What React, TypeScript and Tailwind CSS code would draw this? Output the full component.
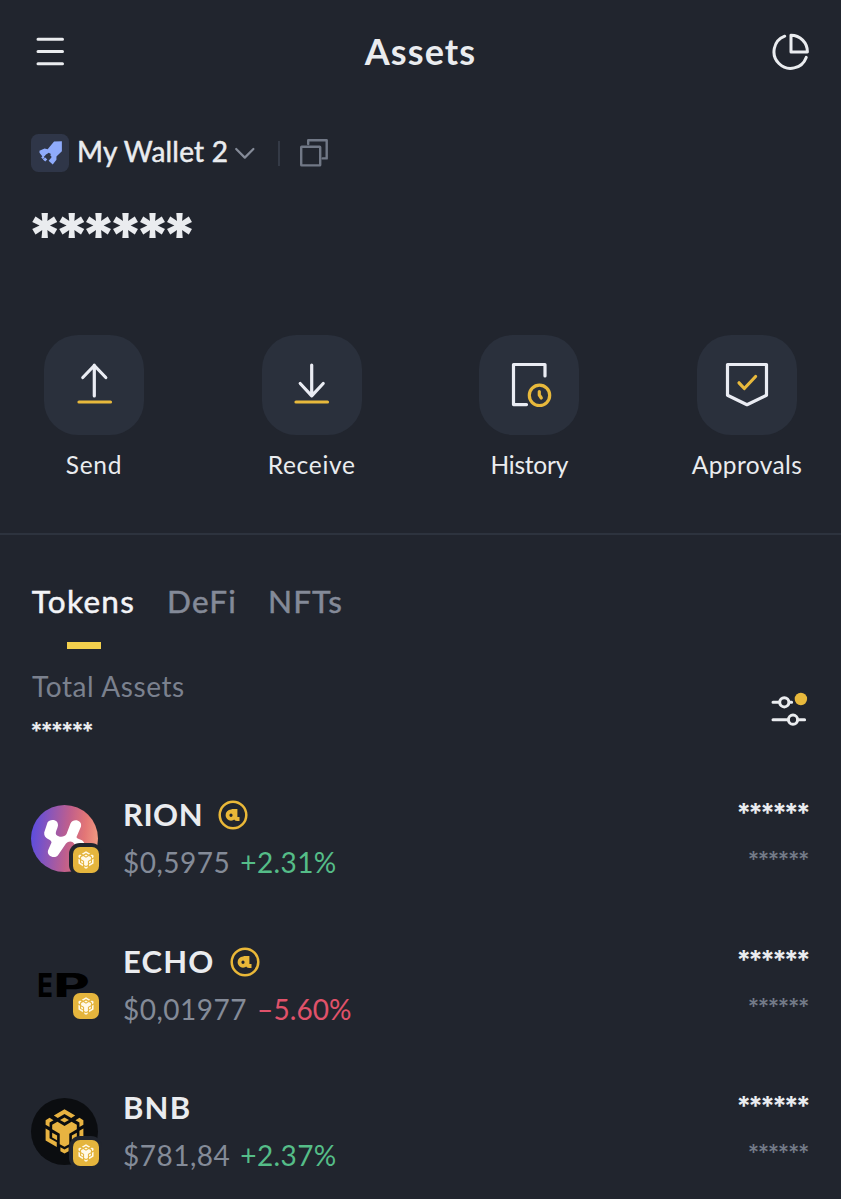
import type { ReactNode } from "react";

function MenuIcon() {
  return (
    <svg width="36" height="36" viewBox="32 34 36 36" fill="none" stroke="#eaecef" strokeWidth="3" strokeLinecap="round">
      <path d="M38 39.3H62.5M38 51.5H62.5M38 63.8H62.5" />
    </svg>
  );
}

function PieIcon() {
  return (
    <svg width="40" height="40" viewBox="771 32 40 40" fill="none" stroke="#eaecef" strokeWidth="3" strokeLinecap="round" strokeLinejoin="round">
      <path d="M784.7 36.2A16.6 16.6 0 1 0 806.2 57.4" />
      <path d="M791 35.2V51.9H807.4A16.5 16.5 0 0 0 791 35.2Z" />
    </svg>
  );
}

function RocketIcon() {
  return (
    <svg width="38" height="38" viewBox="0 0 112 112">
      <rect width="112" height="112" rx="22" fill="#2f3648" />
      <path
        d="M91 21V51L75 66V76L64 90L52 79L57 73L61 68L54 59L44 61L36 69L25 55V49L40 43L49 45L68 22Z"
        fill="#8fabfb"
      />
      <path d="M43 62L52 55L59 59L53 67L47 68Z" fill="#2f3648" />
      <path d="M35 64L40 69L35 74L30 69ZM42 69L48 75L42 81L35 75Z" fill="#8fabfb" />
    </svg>
  );
}

function CopyIcon() {
  return (
    <svg width="32" height="32" viewBox="298 137 32 32" fill="none" stroke="#717886" strokeWidth="2.4" strokeLinecap="round" strokeLinejoin="round">
      <rect x="301.2" y="146.8" width="19" height="18.6" rx="0.5" />
      <path d="M308.2 144V140.2H326.7V158.4H322.6" />
    </svg>
  );
}

function FilterIcon() {
  return (
    <svg width="38" height="38" viewBox="770 690 38 38" fill="none" stroke="#eaecef" strokeWidth="3" strokeLinecap="round">
      <path d="M773 702.3H779M790 702.3H791.6M773 719.7H787.5M798.5 719.7H804.6" />
      <circle cx="784.3" cy="702.3" r="4.6" />
      <circle cx="793" cy="719.7" r="4.6" />
      <circle cx="800.9" cy="699" r="6.2" fill="#e8b93c" stroke="none" />
    </svg>
  );
}

function AlphaBadge() {
  return (
    <svg width="30" height="30" viewBox="0 0 30 30" fill="none" stroke="#eab838" className="mt-[2px]">
      <circle cx="15" cy="15" r="13.3" strokeWidth="2.5" />
      <ellipse cx="13" cy="15.2" rx="3.5" ry="3.7" strokeWidth="3.8" />
      <path d="M13.5 11H17.5V17.2Q17.5 19 19.3 19H21.5" strokeWidth="3.8" />
    </svg>
  );
}

function ChainMark({ color, className }: { color: string; className: string }) {
  return (
    <svg viewBox="76 71 117 137" className={className} fill={color}>
      <path d="M134.5 72L167 91L155 98.5L134.5 86.5L114 98.5L102 91Z" />
      <path d="M134.5 97L148 104.5L134.5 112L121 104.5Z" />
      <path d="M77 105L89 98L101 105L89 112V126L77 119Z" />
      <path d="M192 105L180 98L168 105L180 112V126L192 119Z" />
      <path d="M97 119L113 110L134.5 122.5L156 110L172 119V133L149 146.5V178L134.5 186L120 178V146.5L97 133Z" />
      <path d="M77 130L89 137V160L111 172.5V186.5L77 167Z" />
      <path d="M192 130L180 137V160L158 172.5V186.5L192 167Z" />
      <path d="M97 143L112 151.5V166L97 157.5Z" />
      <path d="M172 143L157 151.5V166L172 157.5Z" />
      <path d="M122 187.5L134.5 194L147 187.5V199.5L134.5 206.5L122 199.5Z" />
    </svg>
  );
}

function RionLogo() {
  return (
    <svg width="67" height="67" viewBox="0 0 67 67">
      <defs>
        <linearGradient id="rion" x1="0" y1="0.4" x2="1" y2="0.5">
          <stop offset="0" stopColor="#5b4de0" />
          <stop offset="0.55" stopColor="#c05f8c" />
          <stop offset="0.8" stopColor="#e37676" />
          <stop offset="1" stopColor="#f09a82" />
        </linearGradient>
      </defs>
      <circle cx="33.5" cy="33.5" r="33.5" fill="url(#rion)" />
      <path
        d="M16.5 17.5C18.500 13.500 27.500 14 27 20.500C26.500 24 23.500 28 25.500 30C28 32.500 33.500 32.500 35.500 29L39.500 18.500C42 13 51.500 15 50 21.500L45.500 32C46 35 52 33.500 53.500 38.500L50 45L44 40C42 35.500 37.500 35.500 35 38.500L27.500 49.500C24.500 54.500 15.500 51.500 17 45.500L20.500 37.500C20.500 33.500 12.500 34.500 13.200 27.500Z"
        fill="#fff"
      />
    </svg>
  );
}

function EchoLogo() {
  return (
    <svg width="67" height="67" viewBox="0 0 67 67" fill="#000" fontFamily="Inter, sans-serif" fontSize="32">
      <text fontWeight="800" transform="translate(6.5 45) scale(0.78 1)">E</text>
      <text fontWeight="800" transform="translate(22.8 45) scale(1.72 1)">P</text>
    </svg>
  );
}

function BnbLogo() {
  return (
    <div className="flex h-[67px] w-[67px] items-center justify-center rounded-full bg-[#0b0d10]">
      <ChainMark color="#e8b341" className="h-[45px] w-[39px]" />
    </div>
  );
}

function Action({ label, spacing, children }: { label: string; spacing: string; children: ReactNode }) {
  return (
    <div className="flex w-[100px] flex-col items-center">
      <div className="h-[100px] w-[100px] rounded-[34px] bg-[#2a303c]">
        <svg viewBox="0 0 100 100" className="h-full w-full" fill="none" stroke="#eaecf3" strokeWidth="3.2" strokeLinecap="round" strokeLinejoin="round">
          {children}
        </svg>
      </div>
      <span className={`mt-[14px] text-[24.5px] leading-[32px] whitespace-nowrap ${spacing}`}>{label}</span>
    </div>
  );
}

type Token = {
  name: string;
  nameSpacing: string;
  price: string;
  change: string;
  up: boolean;
  alpha: boolean;
  ring: boolean;
  logo: ReactNode;
};

const tokens: Token[] = [
  { name: "RION", nameSpacing: "tracking-[0.5px]", price: "$0,5975", change: "+2.31%", up: true, alpha: true, ring: true, logo: <RionLogo /> },
  { name: "ECHO", nameSpacing: "tracking-[1.2px]", price: "$0,01977", change: "–5.60%", up: false, alpha: true, ring: false, logo: <EchoLogo /> },
  { name: "BNB", nameSpacing: "tracking-[1.2px]", price: "$781,84", change: "+2.37%", up: true, alpha: false, ring: true, logo: <BnbLogo /> },
];

function TokenRow({ token }: { token: Token }) {
  return (
    <div className="flex h-[146.5px] items-start">
      <div className="relative mt-[10px] h-[67px] w-[67px] shrink-0">
        {token.logo}
        <div className={`absolute left-[38px] top-[38px] flex h-[33px] w-[33px] items-center justify-center rounded-[11px] ${token.ring ? "bg-[#21252e]" : ""}`}>
          <div className="flex h-[26px] w-[26px] items-center justify-center rounded-[7px] bg-[#e5b53d]">
            <ChainMark color="#fff9e8" className="h-[18px] w-[16px]" />
          </div>
        </div>
      </div>
      <div className="ml-[25px] flex-1">
        <div className="flex h-[38px] items-center gap-[15px]">
          <span className={`text-[31px] leading-[38px] font-bold ${token.nameSpacing}`}>{token.name}</span>
          {token.alpha && <AlphaBadge />}
        </div>
        <div className="mt-[11px] flex gap-[10px] text-[28px] leading-[36px]">
          <span className="tracking-[0.5px] text-[#848b98]">{token.price}</span>
          <span className={token.up ? "tracking-[0.4px] text-[#55bd88]" : "tracking-[0.1px] text-[#e0526a]"}>{token.change}</span>
        </div>
      </div>
      <div className="flex flex-col items-end font-[Inter]">
        <span className="mt-[2px] mr-[1px] h-[24px] text-[26px] leading-[32px] font-bold tracking-[-2.6px]">******</span>
        <span className="mt-[23px] mr-[1px] h-[24px] text-[22px] leading-[30px] font-medium tracking-[-1.4px] text-[#737a87]">******</span>
      </div>
    </div>
  );
}

export default function App() {
  return (
    <div className="h-[1199px] w-[841px] overflow-hidden bg-[#21252e] font-[Lato,sans-serif] text-[#eaecef]">
      <header className="flex h-[104px] items-center justify-between pr-[30px] pl-[32px]">
        <MenuIcon />
        <h1 className="mb-[2px] ml-[2px] text-[36px] leading-[44px] font-bold tracking-[1.1px]">Assets</h1>
        <PieIcon />
      </header>

      <section className="px-[31px] pt-[30px]">
        <div className="flex h-[38px] items-center">
          <RocketIcon />
          <span className="mb-[4px] ml-[8px] w-[153px] text-[28px] leading-[38px] tracking-[0.2px] whitespace-nowrap [-webkit-text-stroke:0.5px_#eaecef]">My Wallet 2</span>
          <svg width="24" height="16" viewBox="233 144 24 16" className="ml-[3px]" fill="none" stroke="#858b98" strokeWidth="2.2" strokeLinecap="round" strokeLinejoin="round">
            <path d="M236.2 148L244.8 156.6L253.4 148" />
          </svg>
          <div className="ml-[21px] h-[25px] w-[2px] bg-[#343a46]" />
          <div className="ml-[18px]">
            <CopyIcon />
          </div>
        </div>
        <div className="mt-[33px] -ml-[4px] h-[51px] font-[Inter] text-[61px] leading-[60px] font-extrabold tracking-[-8.6px]">******</div>
      </section>

      <section className="mt-[79px] flex h-[200px] justify-between border-b-2 border-[#2d333e] px-[44px]">
        <Action label="Send" spacing="tracking-[0.7px]">
          <path d="M50.3 30V61M38.8 42.5L50.3 30.5L61.8 42.5" />
          <path d="M35 67H66.5" stroke="#e8b93c" />
        </Action>
        <Action label="Receive" spacing="tracking-[0.7px]">
          <path d="M49.7 30V60.8M38.2 48.5L49.7 60.8L61.2 48.5" />
          <path d="M34 67H65.5" stroke="#e8b93c" />
        </Action>
        <Action label="History" spacing="tracking-[-0.2px]">
          <path d="M66 41V29.5H34.5V69.6H47.5" />
          <circle cx="60.5" cy="60.3" r="10.2" stroke="#e8b93c" />
          <path d="M60.3 56.5V60L62.3 63" stroke="#e8b93c" />
        </Action>
        <Action label="Approvals" spacing="tracking-[0.4px]">
          <path d="M30.5 29.5H69.5V60.3L50 69.7L30.5 60.3Z" />
          <path d="M42 47.8L47.3 53.5L58.6 41.5" stroke="#e8b93c" />
        </Action>
      </section>

      <nav className="flex gap-[32px] px-[32px] pt-[46px] text-[31.5px] leading-[40px] text-[#848a98]">
        <div className="flex w-[103px] flex-col items-center text-[#f3f4f7]">
          <span className="tracking-[1.3px] [-webkit-text-stroke:0.5px_#f3f4f7]">Tokens</span>
          <div className="mt-[21px] h-[7px] w-[34px] bg-[#f3d04d]" />
        </div>
        <span className="w-[69px] tracking-[1.2px] [-webkit-text-stroke:0.5px_#848a98]">DeFi</span>
        <span className="tracking-[1.1px] [-webkit-text-stroke:0.5px_#848a98]">NFTs</span>
      </nav>

      <section className="flex items-start justify-between pr-[33px] pl-[32px]">
        <div>
          <div className="mt-[19px] text-[28px] leading-[36px] tracking-[0.6px] text-[#7b818e]">Total Assets</div>
          <div className="mt-[13px] -ml-[2px] h-[20px] font-[Inter] text-[23px] leading-[28px] font-bold tracking-[-2.6px]">******</div>
        </div>
        <div className="mt-[41px]">
          <FilterIcon />
        </div>
      </section>

      <section className="mt-[58px] pr-[32px] pl-[31px]">
        {tokens.map((t) => (
          <TokenRow key={t.name} token={t} />
        ))}
      </section>
    </div>
  );
}
